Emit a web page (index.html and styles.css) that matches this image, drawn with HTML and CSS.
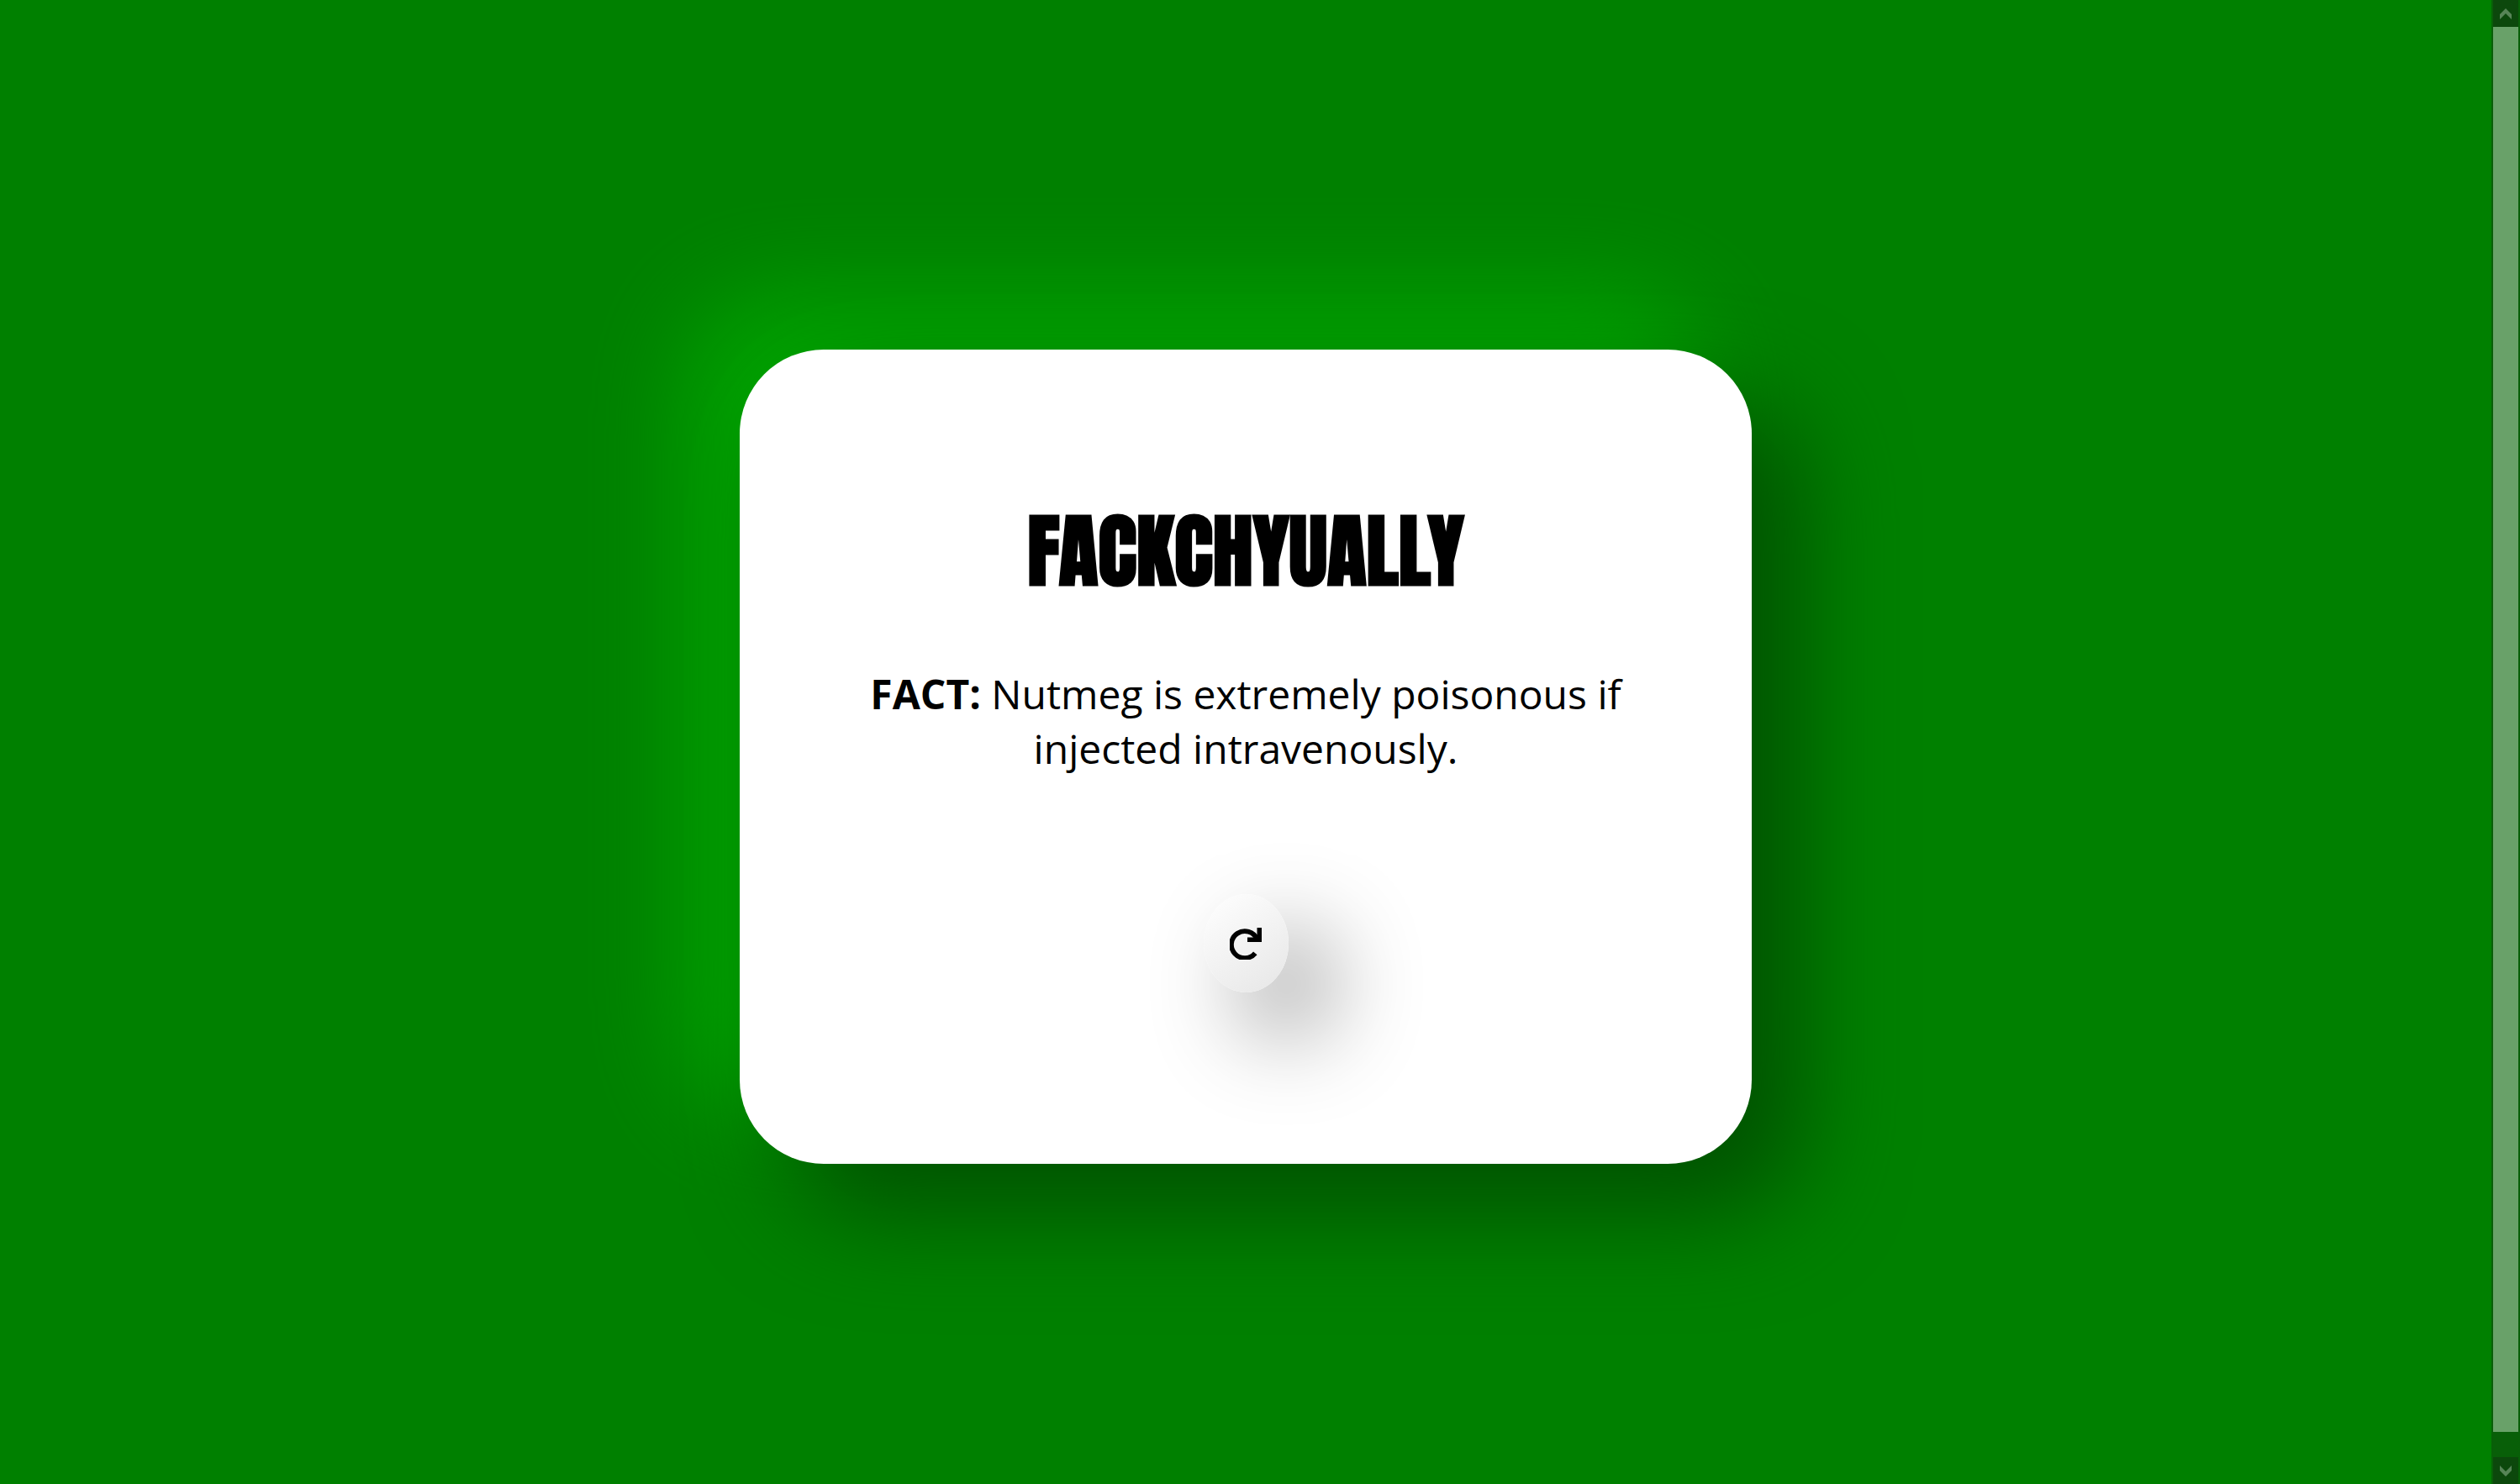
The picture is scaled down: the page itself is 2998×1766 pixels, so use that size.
FILE: index.html
```
<!DOCTYPE html>
<html lang="en">
<head>
  <meta charset="utf-8">
  <meta name="viewport" content="width=device-width, initial-scale=1">
  <title>Fackchyually</title>
  <link rel="stylesheet" href="styles.css">
</head>
<body>
  <main class="page">
    <section class="card">
      <h1 class="title">FACKCHYUALLY</h1>
      <p class="fact"><strong>FACT:</strong> Nutmeg is extremely poisonous if injected intravenously.</p>
      <button class="refresh" type="button" aria-label="New fact">
        <svg class="refresh-icon" viewBox="0 0 38 38" aria-hidden="true">
          <path d="M30.3 30.3A16 16 0 1 1 32.500 13.500" fill="none" stroke="currentColor" stroke-width="5.800"/>
          <path d="M32.500 0H38v17H21v-5.500h9l2.500-3z" fill="currentColor"/>
        </svg>
      </button>
    </section>
  </main>
  <div class="scrollbar">
    <button class="scroll-button" type="button" aria-label="Scroll up">
      <svg class="scroll-icon" viewBox="0 0 14 13" aria-hidden="true"><path d="M0 7l7-7 7 7v6L7 6l-7 7z" fill="currentColor"/></svg>
    </button>
    <div class="scroll-track"><div class="scroll-thumb"></div></div>
    <button class="scroll-button" type="button" aria-label="Scroll down">
      <svg class="scroll-icon" viewBox="0 0 14 13" aria-hidden="true"><path d="M0 6l7 7 7-7V0L7 7 0 0z" fill="currentColor"/></svg>
    </button>
  </div>
</body>
</html>
```
FILE: styles.css
```
* {
  box-sizing: border-box;
}

body {
  display: flex;
  height: 100vh;
  margin: 0;
  overflow: hidden;
  background: #008000;
  color: #000;
  font-family: "Open Sans", sans-serif;
  font-size: 48px;
  line-height: 65px;
}

.page {
  display: flex;
  flex: 1;
  justify-content: center;
  align-items: flex-start;
  padding: 416px 40px 0;
}

.card {
  display: flex;
  flex-direction: column;
  align-items: center;
  width: 100%;
  max-width: 1204px;
  padding: 168px 140px 204px;
  border-radius: 100px;
  background: #fff;
  box-shadow: 60px 60px 120px #005200, -60px -60px 120px #00a600;
  text-align: center;
}

.title {
  margin: 0 0 65px;
  font-family: Anton, Impact, sans-serif;
  font-size: 96px;
  font-weight: 700;
  line-height: 144px;
}

.fact {
  margin: 0 0 141px;
}

.refresh {
  display: flex;
  align-items: center;
  justify-content: center;
  width: 101px;
  height: 117px;
  padding: 0;
  border: 0;
  border-radius: 50%;
  background: linear-gradient(145deg, #fff, #e6e6e6);
  box-shadow: 48px 48px 112px #909090, -48px -48px 112px #fff;
  color: #000;
}

.refresh-icon {
  width: 38px;
  height: 38px;
}

.scrollbar {
  display: flex;
  flex-direction: column;
  width: 34px;
  padding: 0 2px;
  background: #085f08;
}

.scroll-button {
  display: flex;
  align-items: center;
  justify-content: center;
  height: 32px;
  padding: 0;
  border: 0;
  background: #0c480c;
  color: #578457;
}

.scroll-icon {
  width: 14px;
  height: 13px;
}

.scroll-track {
  flex: 1;
  padding-bottom: 30px;
}

.scroll-thumb {
  height: 100%;
  background: #69a169;
}
```
